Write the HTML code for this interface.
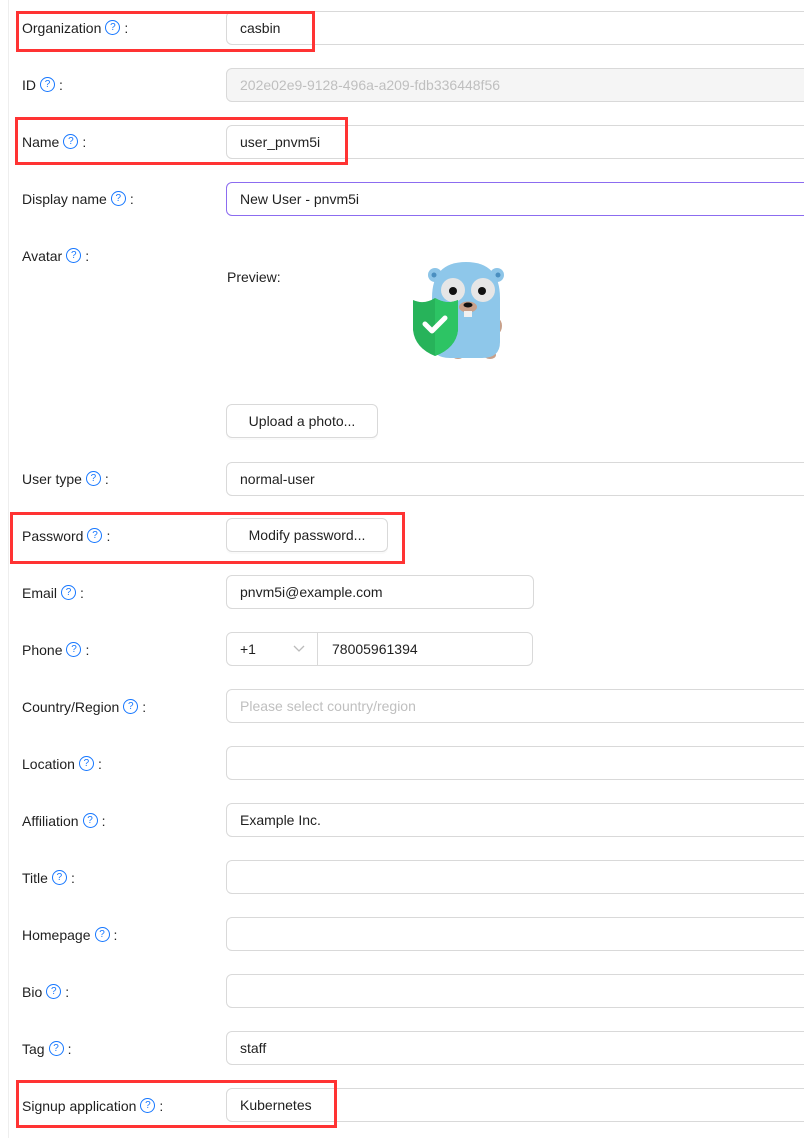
<!DOCTYPE html>
<html><head><meta charset="utf-8"><style>
body{margin:0;width:804px;height:1138px;overflow:hidden;background:#fff;font-family:"Liberation Sans",sans-serif;font-size:14px;color:rgba(0,0,0,.88);position:relative}
.vl{position:absolute;left:8px;top:0;width:1px;height:1138px;background:#eee}
.lb{position:absolute;left:22px;height:20px;line-height:20px;white-space:nowrap}
.q{display:inline-block;width:13px;height:13px;border:1.2px solid #1677ff;border-radius:50%;color:#1677ff;font-size:10px;line-height:13px;text-align:center;vertical-align:middle;position:relative;top:-2px;margin:0 4px 0 4px}
.in{position:absolute;left:226px;width:600px;height:32px;border:1px solid #d9d9d9;border-radius:6px;box-sizing:content-box;line-height:32px;padding-left:13px;white-space:nowrap}
.btn{position:absolute;left:226px;height:32px;border:1px solid #d9d9d9;border-radius:6px;line-height:32px;text-align:center;box-shadow:0 2px 0 rgba(0,0,0,.02)}
.red{position:absolute;border:3px solid #f33;box-sizing:border-box}
</style></head><body>
<div class="vl"></div>

<div class="lb" style="top:18px">Organization<span class="q">?</span>:</div>
<div class="in" style="top:11px">casbin</div>
<div class="lb" style="top:75px">ID<span class="q">?</span>:</div>
<div class="in" style="top:68px;background:#f5f5f5;color:#bfbfbf">202e02e9-9128-496a-a209-fdb336448f56</div>
<div class="lb" style="top:132px">Name<span class="q">?</span>:</div>
<div class="in" style="top:125px">user_pnvm5i</div>
<div class="lb" style="top:189px">Display name<span class="q">?</span>:</div>
<div class="in" style="top:182px;border-color:#8c6cf0">New User - pnvm5i</div>
<div class="lb" style="top:246px">Avatar<span class="q">?</span>:</div>
<div style="position:absolute;left:227px;top:269px">Preview:</div>
<svg style="position:absolute;left:410px;top:258px" width="100" height="104" viewBox="0 0 100 104">
<circle cx="25" cy="17" r="7" fill="#8dc5e8"/><circle cx="87" cy="17" r="7" fill="#8dc5e8"/>
<circle cx="24" cy="17" r="2.5" fill="#4a8fc0"/><circle cx="88" cy="17" r="2.5" fill="#4a8fc0"/>
<ellipse cx="88" cy="68" rx="4" ry="7" fill="#c8a08a"/>
<ellipse cx="48" cy="97" rx="6" ry="4" fill="#c8a08a"/><ellipse cx="80" cy="97" rx="6" ry="4" fill="#c8a08a"/>
<path d="M22 40 Q22 4 56 4 Q90 4 90 40 L90 84 Q90 100 72 100 L40 100 Q22 100 22 84Z" fill="#8ec7ea"/>
<circle cx="43" cy="32" r="12" fill="#e6e6e6"/><circle cx="73" cy="32" r="12" fill="#e6e6e6"/>
<circle cx="43" cy="33" r="4" fill="#111"/><circle cx="72" cy="33" r="4" fill="#111"/>
<ellipse cx="58" cy="49" rx="9" ry="5.5" fill="#c8a08a"/><ellipse cx="58" cy="47" rx="4.5" ry="2.5" fill="#111"/>
<rect x="54" y="53" width="8" height="6" fill="#f0f0f0"/>
<path d="M25 40 Q37 47 48 42 L48 72 Q46 90 25 98 Q5 90 3 72 L3 42 Q14 47 25 40Z" fill="#27b35a"/>
<path d="M25 40 Q37 47 48 42 L48 72 Q46 90 25 98Z" fill="#2dc464"/>
<path d="M15 66 L22 73 L35 60" stroke="#fff" stroke-width="5" fill="none" stroke-linecap="round" stroke-linejoin="round"/>
</svg>
<div class="btn" style="top:404px;width:150px">Upload a photo...</div>
<div class="lb" style="top:469px">User type<span class="q">?</span>:</div>
<div class="in" style="top:462px">normal-user</div>
<div class="lb" style="top:526px">Password<span class="q">?</span>:</div>
<div class="btn" style="top:518px;width:160px">Modify password...</div>
<div class="lb" style="top:583px">Email<span class="q">?</span>:</div>
<div class="in" style="top:575px;width:293px">pnvm5i@example.com</div>
<div class="lb" style="top:640px">Phone<span class="q">?</span>:</div>
<div class="in" style="top:632px;width:305px;padding-left:0">
<span style="position:absolute;left:13px">+1</span>
<svg style="position:absolute;left:66px;top:12px" width="12" height="8" viewBox="0 0 12 8"><path d="M1 1l5 5 5-5" stroke="#bbb" stroke-width="1.3" fill="none"/></svg>
<span style="position:absolute;left:90px;top:0;width:1px;height:32px;background:#d9d9d9"></span>
<span style="position:absolute;left:105px">78005961394</span></div>
<div class="lb" style="top:697px">Country/Region<span class="q">?</span>:</div>
<div class="in" style="top:689px;color:#bfbfbf">Please select country/region</div>
<div class="lb" style="top:754px">Location<span class="q">?</span>:</div>
<div class="in" style="top:746px"></div>
<div class="lb" style="top:811px">Affiliation<span class="q">?</span>:</div>
<div class="in" style="top:803px">Example Inc.</div>
<div class="lb" style="top:868px">Title<span class="q">?</span>:</div>
<div class="in" style="top:860px"></div>
<div class="lb" style="top:925px">Homepage<span class="q">?</span>:</div>
<div class="in" style="top:917px"></div>
<div class="lb" style="top:982px">Bio<span class="q">?</span>:</div>
<div class="in" style="top:974px"></div>
<div class="lb" style="top:1039px">Tag<span class="q">?</span>:</div>
<div class="in" style="top:1031px">staff</div>
<div class="lb" style="top:1096px">Signup application<span class="q">?</span>:</div>
<div class="in" style="top:1088px">Kubernetes</div>

<div class="red" style="left:16px;top:11px;width:299px;height:41px"></div>
<div class="red" style="left:15px;top:117px;width:333px;height:48px"></div>
<div class="red" style="left:10px;top:512px;width:395px;height:52px"></div>
<div class="red" style="left:16px;top:1080px;width:321px;height:48px"></div>
</body></html>
